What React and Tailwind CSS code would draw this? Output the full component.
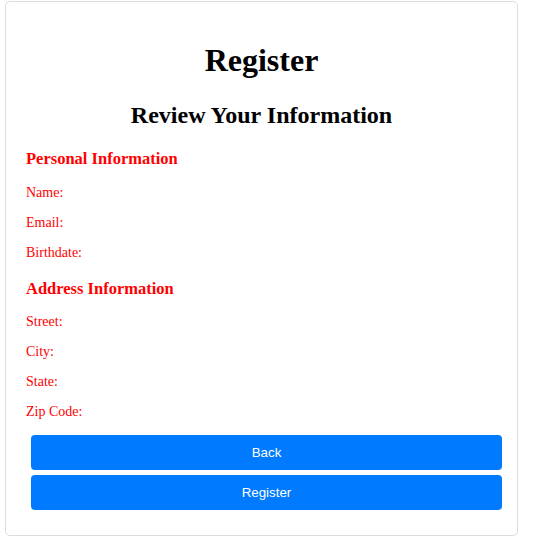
import React from 'react';

const personal = ['Name:', 'Email:', 'Birthdate:'];
const address = ['Street:', 'City:', 'State:', 'Zip Code:'];

const Row = ({ label }) => (
  <p className="text-[14px] leading-[16px] text-[#ff0000] mb-[14px] last:mb-0">{label}</p>
);

const App = () => {
  return (
    <div className="bg-white min-h-screen pt-[1px] pl-[5px] font-['Liberation_Serif',serif]">
      <div className="w-[513px] border border-[#dddddd] rounded-[5px] px-5 pt-[40px] pb-[25px] bg-white">
        <h1 className="text-[32px] leading-[37px] font-bold text-center text-black">Register</h1>
        <h2 className="mt-[22px] text-[24px] leading-[28px] font-bold text-center text-black">
          Review Your Information
        </h2>

        {/* Personal */}
        <h3 className="mt-[20px] text-[16.5px] leading-[20px] font-bold text-[#ff0000]">Personal Information</h3>
        <div className="mt-[16px]">
          {personal.map((l) => (
            <Row key={l} label={l} />
          ))}
        </div>

        {/* Address */}
        <h3 className="mt-[18px] text-[16.5px] leading-[20px] font-bold text-[#ff0000]">Address Information</h3>
        <div className="mt-[15px]">
          {address.map((l) => (
            <Row key={l} label={l} />
          ))}
        </div>

        <div className="mt-[15px] flex flex-col gap-[5px] ml-[5px] mr-[-5px]">
          <button
            type="button"
            className="h-[35px] w-full rounded-[4px] bg-[#007bff] text-white text-[13.33px] font-['Liberation_Sans',Arial,sans-serif]"
          >
            Back
          </button>
          <button
            type="button"
            className="h-[35px] w-full rounded-[4px] bg-[#007bff] text-white text-[13.33px] font-['Liberation_Sans',Arial,sans-serif]"
          >
            Register
          </button>
        </div>
      </div>
    </div>
  );
};

export default App;
